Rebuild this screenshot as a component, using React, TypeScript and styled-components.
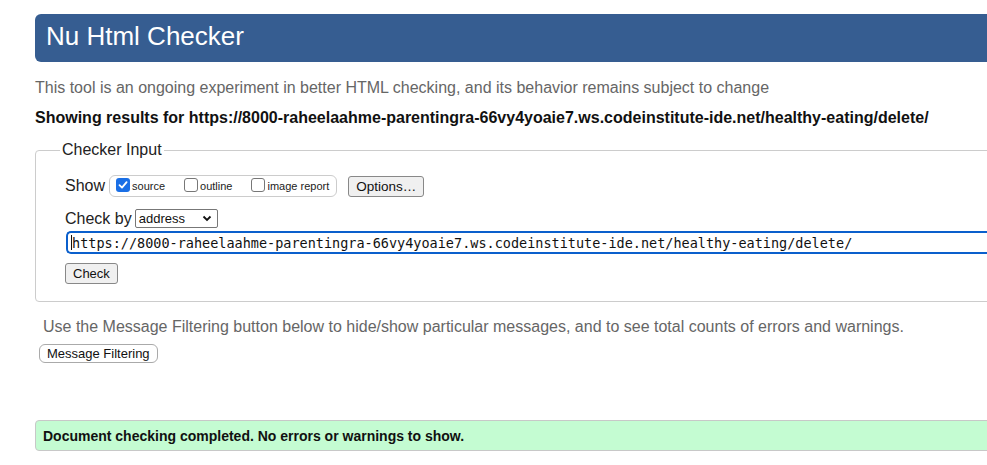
import React from "react";
import styled, { createGlobalStyle } from "styled-components";

const Global = createGlobalStyle`
  html, body { margin: 0; padding: 0; background: #fff; overflow: hidden; }
  body { font-family: "Liberation Sans", Arial, sans-serif; color: #111; }
`;

const Page = styled.div`
  width: 1100px;
  padding: 14px 0 0 35px;
  display: flex;
  flex-direction: column;
`;

const Header = styled.h1`
  margin: 0;
  height: 48px;
  box-sizing: border-box;
  background: #365d91;
  border-radius: 6px;
  color: #fff;
  font-size: 26px;
  font-weight: normal;
  line-height: 45px;
  padding-left: 11px;
`;

const Intro = styled.p`
  margin: 16px 0 0 0;
  color: #666;
  font-size: 16px;
  line-height: 20px;
`;

const Results = styled.p`
  margin: 10px 0 0 0;
  font-size: 16px;
  font-weight: bold;
  line-height: 20px;
  color: #111;
`;

const Fieldset = styled.fieldset`
  margin: 13px 0 0 0;
  padding: 16px 0 17px 29px;
  border: 1px solid #ccc;
  border-radius: 4px;
  min-width: 0;
  display: flex;
  flex-direction: column;
`;

const Legend = styled.legend`
  padding: 0 2px;
  margin-left: -5px;
  font-size: 16px;
  color: #222;
`;

const Row = styled.div<{ gap?: number; mt?: number }>`
  display: flex;
  align-items: center;
  gap: ${(p) => p.gap ?? 4}px;
  margin-top: ${(p) => p.mt ?? 0}px;
  font-size: 16px;
  color: #222;
`;

const ShowGroup = styled.div`
  display: flex;
  align-items: center;
  height: 20px;
  border: 1px solid #ccc;
  border-radius: 6px;
  padding: 0 7px 0 6px;
  margin-left: 4px;
  gap: 19px;
`;

const Opt = styled.label`
  display: flex;
  align-items: center;
  font-size: 11px;
  color: #222;
`;

const Box = styled.span<{ checked?: boolean }>`
  width: 14px;
  height: 14px;
  box-sizing: border-box;
  border-radius: 3px;
  margin-right: 2px;
  margin-top: -3px;
  border: ${(p) => (p.checked ? "none" : "1px solid #777")};
  background: ${(p) => (p.checked ? "#1a6fe6" : "#fff")};
  display: inline-flex;
  align-items: center;
  justify-content: center;
`;

const Button = styled.button<{ fs?: number; ml?: number }>`
  font-family: "Liberation Sans", Arial, sans-serif;
  font-size: ${(p) => p.fs ?? 13}px;
  margin-left: ${(p) => p.ml ?? 0}px;
  color: #111;
  background: #f0f0f0;
  border: 1px solid #888;
  border-radius: 3px;
  height: 21px;
  padding: 0 7px;
  line-height: 19px;
`;

const Select = styled.div`
  display: flex;
  align-items: center;
  justify-content: space-between;
  width: 83px;
  height: 19px;
  box-sizing: border-box;
  border: 1px solid #777;
  border-radius: 2px;
  padding: 0 5px 0 3px;
  font-size: 13px;
  color: #111;
  background: #fff;
`;

const UrlInput = styled.div`
  margin: 3px 0 0 1px;
  height: 23px;
  box-sizing: border-box;
  border: 2px solid #0a5fcc;
  border-right: none;
  border-radius: 5px 0 0 5px;
  display: flex;
  align-items: center;
  padding-left: 3px;
  font-family: "DejaVu Sans Mono", "Liberation Mono", monospace;
  font-size: 13.5px;
  color: #111;
  white-space: nowrap;
`;

const Caret = styled.span`
  display: inline-block;
  width: 1px;
  height: 15px;
  background: #111;
`;

const Note = styled.p`
  margin: 15px 0 0 8px;
  color: #666;
  font-size: 16px;
  line-height: 20px;
`;

const FilterButton = styled(Button)`
  align-self: flex-start;
  margin: 7px 0 0 4px;
  background: #fff;
  border-color: #aaa;
  border-radius: 6px;
  height: 19px;
  line-height: 17px;
`;

const Success = styled.div`
  margin-top: 57px;
  height: 31px;
  box-sizing: border-box;
  background: #c4fcd2;
  border: 1px solid #c8c8c8;
  border-radius: 4px;
  padding-left: 7px;
  display: flex;
  align-items: center;
  font-size: 14px;
  font-weight: bold;
  color: #111;
`;

const Check = () => (
  <svg width="10" height="10" viewBox="0 0 10 10">
    <path d="M1.5 5.2 L4 7.6 L8.6 2.2" stroke="#fff" strokeWidth="1.8" fill="none" strokeLinecap="round" strokeLinejoin="round" />
  </svg>
);

const Chevron = () => (
  <svg width="10" height="7" viewBox="0 0 10 7">
    <path d="M1.5 1.5 L5 5 L8.5 1.5" stroke="#111" strokeWidth="1.8" fill="none" />
  </svg>
);

const url = "https://8000-raheelaahme-parentingra-66vy4yoaie7.ws.codeinstitute-ide.net/healthy-eating/delete/";

export default function App() {
  return (
    <>
      <Global />
      <Page>
        <Header>Nu Html Checker</Header>
        <Intro>This tool is an ongoing experiment in better HTML checking, and its behavior remains subject to change</Intro>
        <Results>Showing results for {url}</Results>
        <Fieldset>
          <Legend>Checker Input</Legend>
          <Row gap={0}>
            Show
            <ShowGroup>
              <Opt><Box checked><Check /></Box>source</Opt>
              <Opt><Box />outline</Opt>
              <Opt><Box />image report</Opt>
            </ShowGroup>
            <Button fs={13.5} ml={11}>Options…</Button>
          </Row>
          <Row gap={3} mt={12}>
            Check by
            <Select>address<Chevron /></Select>
          </Row>
          <UrlInput><Caret />{url}</UrlInput>
          <Row mt={9}>
            <Button>Check</Button>
          </Row>
        </Fieldset>
        <Note>Use the Message Filtering button below to hide/show particular messages, and to see total counts of errors and warnings.</Note>
        <FilterButton>Message Filtering</FilterButton>
        <Success>Document checking completed. No errors or warnings to show.</Success>
      </Page>
    </>
  );
}
